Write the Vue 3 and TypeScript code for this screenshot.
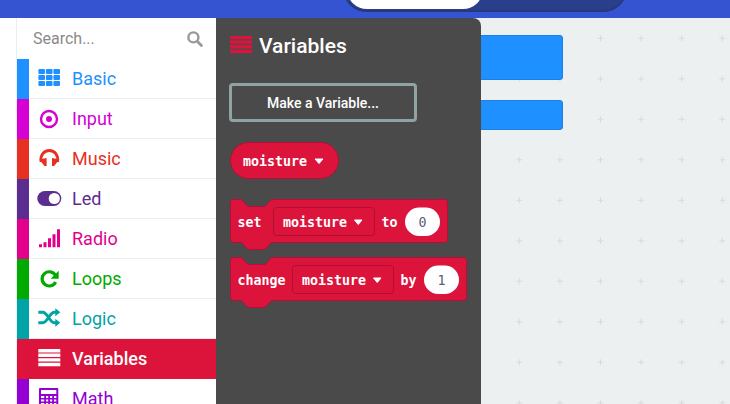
<script setup lang="ts">
interface Category {
  name: string
  color: string
  icon: string
  active?: boolean
}

const categories: Category[] = [
  { name: 'Basic', color: '#1e90ff', icon: 'grid' },
  { name: 'Input', color: '#d400d4', icon: 'target' },
  { name: 'Music', color: '#e63022', icon: 'headphones' },
  { name: 'Led', color: '#5c2d91', icon: 'toggle' },
  { name: 'Radio', color: '#e3008c', icon: 'signal' },
  { name: 'Loops', color: '#00aa00', icon: 'redo' },
  { name: 'Logic', color: '#00a4a6', icon: 'shuffle' },
  { name: 'Variables', color: '#dc143c', icon: 'lines', active: true },
  { name: 'Math', color: '#9400d3', icon: 'calc' },
]

// workspace grid, spacing is not a round number in the screenshot
const plusX = [0, 1, 2, 3, 4, 5].map((i) => 519.3 + i * 40.6)
const plusY = [0, 1, 2, 3, 4, 5, 6, 7, 8, 9].map((i) => 38.3 + i * 40.5)
</script>

<template>
  <div class="page">
    <header class="topbar">
      <div class="toggle">
        <div class="toggle-on"></div>
      </div>
    </header>
    <div class="main">
      <aside class="toolbox">
        <div class="search">
          <span>Search...</span>
          <svg class="search-icon" width="16" height="16" viewBox="0 0 16 16">
            <circle cx="6.4" cy="6.4" r="5" fill="none" stroke="#999" stroke-width="2.4" />
            <path d="M10.2 10.2 14.4 14.400" stroke="#999" stroke-width="2.8" stroke-linecap="round" />
          </svg>
        </div>
        <div
          v-for="cat in categories"
          :key="cat.name"
          class="row"
          :class="{ active: cat.active }"
          :style="{ color: cat.active ? '#fff' : cat.color, background: cat.active ? cat.color : '' }"
        >
          <div class="stripe" :style="{ background: cat.color }"></div>
          <svg class="icon" width="24" height="24" viewBox="0 0 24 24" fill="currentColor">
            <template v-if="cat.icon === 'grid'">
              <g v-for="y in [2, 8, 14]" :key="y">
                <rect v-for="x in [0.4, 7.9, 15.4]" :key="x" :x="x" :y="y" width="6.600" height="5" rx="1" />
              </g>
            </template>
            <template v-else-if="cat.icon === 'target'">
              <circle cx="11" cy="12" r="8" fill="none" stroke="currentColor" stroke-width="2.400" />
              <circle cx="11" cy="12" r="3" />
            </template>
            <template v-else-if="cat.icon === 'headphones'">
              <path d="M3 15C2 8 6 3.500 11.300 3.500S20.600 8 19.600 15" fill="none" stroke="currentColor" stroke-width="2.800" />
              <path d="M1.300 12.500 8.600 11v8H6.500zM21.300 12.500 14 11v8h2.100z" />
            </template>
            <template v-else-if="cat.icon === 'toggle'">
              <rect x="-0.7" y="4" width="24" height="15" rx="7.500" />
              <circle cx="16.300" cy="11.500" r="5.600" fill="#fff" />
            </template>
            <template v-else-if="cat.icon === 'signal'">
              <path d="M1 17.300h3v3H1zM5.500 15.300h3v5h-3zM10 11.300h3v9h-3zM14.500 7.300h3v13h-3zM19 2.300h3v18h-3z" />
            </template>
            <template v-else-if="cat.icon === 'redo'">
              <path d="M17.300 8.200A7.100 7.100 0 1 0 17.600 15" fill="none" stroke="currentColor" stroke-width="3.200" />
              <path d="M20.700 3.700v8h-8z" />
            </template>
            <template v-else-if="cat.icon === 'shuffle'">
              <path d="M.3 5.300h4.500c4.500 0 7 10.400 11.500 10.400h2M.3 15.700h4.500c4.500 0 7-10.400 11.500-10.400h2" fill="none" stroke="currentColor" stroke-width="3" />
              <path d="M17.300 1.300 22.300 5.300l-5 4zM17.300 11.700l5 4-5 4z" />
            </template>
            <template v-else-if="cat.icon === 'lines'">
              <path d="M.3 2h22v3.400H.3zM.3 6.600h22v3.400H.3zM.3 11.200h22v3.400H.3zM.3 15.800h22v3.400H.3z" />
            </template>
            <template v-else>
              <path fill-rule="evenodd" d="M2 1h17.300a1 1 0 0 1 1 1v22H1V2a1 1 0 0 1 1-1zM3 3v4h15.300V3zM3 9v2h3.200V9zM8 9v2h2.200V9zM12 9v2h2.200V9zM16 9v2h2.300V9zM3 12.500v2h3.200v-2zM8 12.500v2h2.200v-2zM12 12.500v2h2.200v-2zM16 12.500v2h2.300v-2zM3 16v2h3.200v-2zM8 16v2h2.200v-2zM12 16v2h2.200v-2zM16 16v2h2.300v-2z" />
            </template>
          </svg>
          <span class="label">{{ cat.name }}</span>
        </div>
      </aside>

      <div class="workspace">
        <svg class="grid" width="730" height="404">
          <g v-for="x in plusX" :key="x">
            <path
              v-for="y in plusY"
              :key="y"
              :d="`M${x - 3} ${y}h6M${x} ${y - 3}v6`"
              stroke="#d6dbde"
              stroke-width="1"
            />
          </g>
        </svg>
        <div class="stack one"></div>
        <div class="stack two"></div>

        <div class="flyout">
          <h2 class="fly-title">
            <svg width="22" height="17" viewBox="0 0 22 17" fill="#dc143c">
              <path d="M0 0h22v3.300H0zM0 4.550h22v3.300H0zM0 9.100h22v3.300H0zM0 13.650h22v3.300H0z" />
            </svg>
            Variables
          </h2>
          <button class="make" type="button">Make a Variable...</button>

          <svg class="blocks" width="260" height="180" viewBox="0 0 260 180">
            <rect x="14.500" y="0.500" width="108" height="36" rx="18" class="shape" />
            <text x="27" y="24" class="txt">moisture</text>
            <path d="M99 17h8l-4 4.500z" fill="#fff" stroke="#fff" stroke-linejoin="round" />

            <path
              class="shape"
              d="M14.500 60.500a3 3 0 0 1 3-3h8l6.500 7h17l6.500-7H228.500a3 3 0 0 1 3 3v37a3 3 0 0 1-3 3H55.500l-5 5.500q-1.500 1.500-3 1.500h-14q-1.500 0-3-1.500l-5-5.500h-8a3 3 0 0 1-3-3z"
            />
            <text x="21.500" y="85" class="txt">set</text>
            <rect x="57.500" y="65.500" width="101" height="28" rx="3" class="field" />
            <text x="67" y="85" class="txt">moisture</text>
            <path d="M138.500 78h7.500l-3.750 4.500z" fill="#fff" stroke="#fff" stroke-linejoin="round" />
            <text x="165.500" y="85" class="txt">to</text>
            <rect x="189" y="65.500" width="35" height="28.500" rx="14.250" fill="#fff" />
            <text x="206.500" y="85" class="num" text-anchor="middle">0</text>

            <path
              class="shape"
              d="M14.500 118.500a3 3 0 0 1 3-3h8l6.500 7h17l6.500-7H247.500a3 3 0 0 1 3 3v37a3 3 0 0 1-3 3H55.500l-5 5.500q-1.500 1.500-3 1.500h-14q-1.500 0-3-1.500l-5-5.500h-8a3 3 0 0 1-3-3z"
            />
            <text x="21.500" y="143" class="txt">change</text>
            <rect x="76.500" y="123.500" width="101" height="28" rx="3" class="field" />
            <text x="86" y="143" class="txt">moisture</text>
            <path d="M157.500 136h7.500l-3.750 4.500z" fill="#fff" stroke="#fff" stroke-linejoin="round" />
            <text x="184.500" y="143" class="txt">by</text>
            <rect x="208" y="123.500" width="35" height="28.500" rx="14.250" fill="#fff" />
            <text x="225.500" y="143" class="num" text-anchor="middle">1</text>
          </svg>
        </div>
      </div>
    </div>
  </div>
</template>

<style scoped>
.page {
  width: 730px;
  height: 404px;
  overflow: hidden;
  display: flex;
  flex-direction: column;
  font-family: Roboto, sans-serif;
  background: #fff;
}

.topbar {
  height: 18px;
  flex: none;
  background: #3454d1;
  position: relative;
}

.toggle {
  position: absolute;
  left: 343px;
  top: -30px;
  width: 284px;
  height: 42px;
  border-radius: 0 0 24px 24px;
  background: #2a3f8c;
  box-shadow: inset 0 -2px 0 #27397a;
}

.toggle-on {
  position: absolute;
  left: 4px;
  top: 0;
  width: 136px;
  height: 39px;
  border-radius: 0 0 20px 20px;
  background: #fff;
}

.main {
  flex: 1;
  display: flex;
  min-height: 0;
  padding-left: 16px;
}

.toolbox {
  width: 200px;
  flex: none;
  background: #fff;
  border-left: 1px solid #e9eef2;
  box-sizing: border-box;
}

.search {
  height: 41px;
  display: flex;
  align-items: center;
  justify-content: space-between;
  padding: 0 13px 0 16px;
  color: #8a8a8a;
  font-size: 16px;
}

.search-icon {
  flex: none;
}

.row {
  height: 40px;
  box-sizing: border-box;
  display: flex;
  align-items: center;
  border-bottom: 1px solid #e9eef2;
}

.row.active {
  border-bottom: none;
}

.stripe {
  width: 12px;
  height: 40px;
  flex: none;
  align-self: flex-start;
}

.icon {
  margin-left: 9px;
  flex: none;
  overflow: visible;
  align-self: flex-start;
  margin-top: 8px;
}

.label {
  margin-left: 10px;
  font-size: 18px;
  line-height: 24px;
}

.row.active .label {
  font-weight: 500;
}

.workspace {
  flex: 1;
  position: relative;
  background: #ecf0f1;
  min-width: 0;
}

.grid {
  position: absolute;
  left: -216px;
  top: -18px;
}

.stack {
  position: absolute;
  left: 200px;
  width: 147px;
  background: #1e90ff;
  border: 1px solid #1b81e5;
  box-sizing: border-box;
  border-radius: 3px;
}

.one {
  top: 17px;
  height: 45px;
}

.two {
  top: 82px;
  height: 30px;
}

.flyout {
  position: absolute;
  left: 0;
  top: 0;
  bottom: 0;
  width: 265px;
  background: #4b4a4a;
  border-radius: 0 8px 0 0;
  color: #fff;
}

.fly-title {
  margin: 0;
  height: 56px;
  box-sizing: border-box;
  padding: 15px 0 0 14px;
  display: flex;
  align-items: flex-start;
  gap: 7px;
  font-size: 21px;
  font-weight: 500;
  line-height: 26px;
}

.fly-title svg {
  margin-top: 3px;
}

.make {
  display: block;
  margin: 9px 0 0 13px;
  width: 188px;
  height: 39px;
  background: transparent;
  border: 3px solid #8fa3a3;
  border-radius: 4px;
  color: #fff;
  font-family: Roboto, sans-serif;
  font-size: 14px;
  font-weight: 500;
}

.blocks {
  position: absolute;
  left: 0;
  top: 124px;
}

.shape {
  fill: #dc143c;
  stroke: #b0103a;
}

.field {
  fill: #dc143c;
  stroke: #b0102f;
}

.txt {
  font-family: 'DejaVu Sans Mono', monospace;
  font-weight: 700;
  font-size: 13.3px;
  fill: #fff;
}

.num {
  font-family: 'DejaVu Sans Mono', monospace;
  font-size: 13.3px;
  fill: #575e75;
}
</style>
